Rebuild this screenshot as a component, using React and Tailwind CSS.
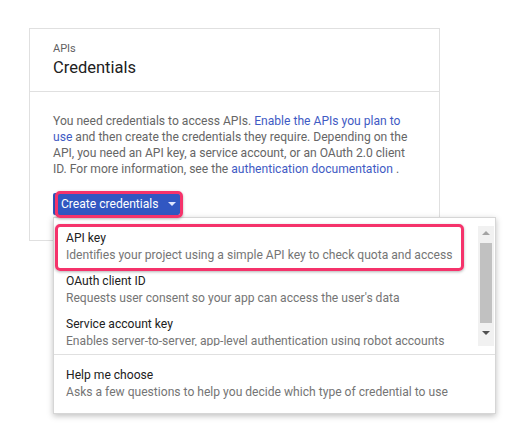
import React from "react";

const items = [
  {
    title: "API key",
    desc: "Identifies your project using a simple API key to check quota and access",
  },
  {
    title: "OAuth client ID",
    desc: "Requests user consent so your app can access the user's data",
  },
  {
    title: "Service account key",
    desc: "Enables server-to-server, app-level authentication using robot accounts",
  },
];

const MenuItem = ({ title, desc }) => (
  <div className="pl-3 pt-[4px] pb-[5px] leading-[17px] whitespace-nowrap">
    <div className="text-[12.1px] text-[#212121]">{title}</div>
    <div className="text-[12.1px] text-[#757575]">{desc}</div>
  </div>
);

const App = () => {
  return (
    <div
      className="relative w-[523px] h-[442px] bg-white overflow-hidden"
      style={{ fontFamily: "Roboto, 'Liberation Sans', sans-serif" }}
    >
      {/* CARD */}
      <div className="ml-[29px] mt-[28px] w-[411px] border border-[#e0e0e0] bg-white">
        <div className="pl-[23px] pt-[13px] pb-[12px] border-b border-[#e0e0e0]">
          <div className="text-[11px] leading-[14px] text-[#616161]">APIs</div>
          <div className="mt-[1px] text-[16.5px] leading-[22px] text-[#212121]">
            Credentials
          </div>
        </div>

        <div className="pl-[23px] pr-[26px] pt-[21px] pb-[25px]">
          <p className="text-[12.1px] leading-[16px] text-[#666]">
            You need credentials to access APIs.{" "}
            <span className="text-[#3f5bc4]">Enable the APIs you plan to use</span>{" "}
            and then create the credentials they require. Depending on the API,
            you need an API key, a service account, or an OAuth 2.0 client ID.
            For more information, see the{" "}
            <span className="text-[#3f5bc4]">authentication documentation</span> .
          </p>

          <button className="mt-4 h-[22px] w-[127px] flex items-center pl-[8px] bg-[#3157c2] rounded-[2px] text-white text-[12.1px]">
            Create credentials
            <span className="ml-[9px] w-0 h-0 border-l-[4px] border-r-[4px] border-t-[4px] border-l-transparent border-r-transparent border-t-[#dfe6ff]" />
          </button>
        </div>
      </div>

      {/* DROPDOWN */}
      <div className="absolute left-[53px] top-[217px] w-[443px] h-[197px] bg-white border border-[#d6d6d6] shadow-[0_2px_6px_rgba(0,0,0,0.25)]">
        <div className="pt-2 pb-2 border-b border-[#e0e0e0]">
          <div className="flex h-[120px]">
            <div className="flex-1 overflow-hidden">
              {items.map((it) => (
                <MenuItem key={it.title} title={it.title} desc={it.desc} />
              ))}
            </div>
            {/* fake scrollbar */}
            <div className="w-[16px] mr-[1px] bg-[#f1f1f1] flex flex-col items-center">
              <div className="mt-[5px] w-0 h-0 border-l-[4px] border-r-[4px] border-b-[4px] border-l-transparent border-r-transparent border-b-[#a3a3a3]" />
              <div className="mt-[8px] w-[12px] h-[80px] bg-[#c1c1c1]" />
              <div className="mt-[8px] w-0 h-0 border-l-[4px] border-r-[4px] border-t-[4px] border-l-transparent border-r-transparent border-t-[#505050]" />
            </div>
          </div>
        </div>
        <div className="pt-[8px]">
          <MenuItem
            title="Help me choose"
            desc="Asks a few questions to help you decide which type of credential to use"
          />
        </div>
      </div>

      {/* HIGHLIGHTS */}
      <div className="absolute left-[55px] top-[191px] w-[128px] h-[27px] border-[3px] border-[#f5336b] rounded-[5px] shadow-[0_1px_3px_rgba(0,0,0,0.3)]" />
      <div className="absolute left-[55px] top-[224px] w-[409px] h-[47px] border-[3px] border-[#f5336b] rounded-[5px] shadow-[0_1px_3px_rgba(0,0,0,0.3)]" />
    </div>
  );
};

export default App;
